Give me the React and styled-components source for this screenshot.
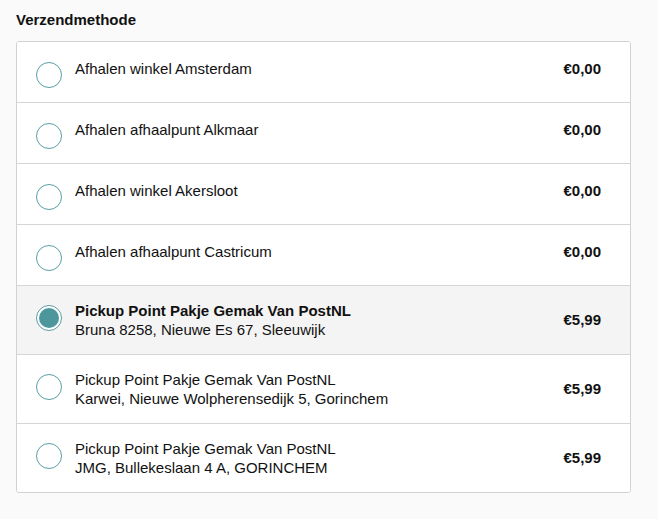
import React, { useState } from "react";
import styled, { createGlobalStyle } from "styled-components";

const Global = createGlobalStyle`
  html, body { margin: 0; padding: 0; background: #fafafa; }
  body { font-family: "Liberation Sans", Arial, sans-serif; color: #111; }
`;

const Page = styled.div`
  padding: 10px 27px 26px 16px;
`;

const Title = styled.h2`
  margin: 0 0 12px 0;
  font-size: 15px;
  font-weight: bold;
  line-height: 19px;
  color: #111;
`;

const Card = styled.div`
  background: #fff;
  border: 1px solid #d2d2d2;
  border-radius: 3px;
  overflow: hidden;
`;

const Row = styled.label`
  display: flex;
  align-items: flex-start;
  height: ${(p) => (p.$double ? "68px" : "60px")};
  padding: 0 29px 0 19px;
  background: ${(p) => (p.$selected ? "#f4f4f4" : "#fff")};
  border-top: ${(p) => (p.$first ? "none" : "1px solid #d5d5d5")};
  cursor: pointer;
`;

const Radio = styled.span`
  flex: none;
  width: 26px;
  height: 26px;
  margin-top: ${(p) => (p.$double ? "19px" : "20px")};
  box-sizing: border-box;
  border-radius: 50%;
  border: 1px solid #5a9ea3;
  background: #fff;
  display: flex;
  align-items: center;
  justify-content: center;
  margin-right: 13px;
  &::after {
    content: "";
    display: ${(p) => (p.$checked ? "block" : "none")};
    width: 20px;
    height: 20px;
    border-radius: 50%;
    background: #4b979c;
  }
`;

const Text = styled.div`
  flex: 1;
  font-size: 15px;
  line-height: 19px;
  margin-top: ${(p) => (p.$double ? "15px" : "17px")};
`;

const Name = styled.div`
  font-weight: ${(p) => (p.$bold ? "bold" : "normal")};
`;

const Price = styled.div`
  font-size: 15px;
  line-height: 19px;
  font-weight: bold;
  white-space: nowrap;
  margin-top: ${(p) => (p.$double ? "24px" : "17px")};
`;

const options = [
  { name: "Afhalen winkel Amsterdam", price: "€0,00" },
  { name: "Afhalen afhaalpunt Alkmaar", price: "€0,00" },
  { name: "Afhalen winkel Akersloot", price: "€0,00" },
  { name: "Afhalen afhaalpunt Castricum", price: "€0,00" },
  { name: "Pickup Point Pakje Gemak Van PostNL", sub: "Bruna 8258, Nieuwe Es 67, Sleeuwijk", price: "€5,99" },
  { name: "Pickup Point Pakje Gemak Van PostNL", sub: "Karwei, Nieuwe Wolpherensedijk 5, Gorinchem", price: "€5,99" },
  { name: "Pickup Point Pakje Gemak Van PostNL", sub: "JMG, Bullekeslaan 4 A, GORINCHEM", price: "€5,99" },
];

export default function App() {
  const [sel, setSel] = useState(4);
  return (
    <>
      <Global />
      <Page>
        <Title>Verzendmethode</Title>
        <Card>
          {options.map((o, i) => {
            const double = !!o.sub;
            return (
              <Row
                key={i}
                $first={i === 0}
                $double={double}
                $selected={sel === i}
                onClick={() => setSel(i)}
              >
                <Radio $checked={sel === i} $double={double} />
                <Text $double={double}>
                  <Name $bold={sel === i}>{o.name}</Name>
                  {o.sub && <div>{o.sub}</div>}
                </Text>
                <Price $double={double}>{o.price}</Price>
              </Row>
            );
          })}
        </Card>
      </Page>
    </>
  );
}
